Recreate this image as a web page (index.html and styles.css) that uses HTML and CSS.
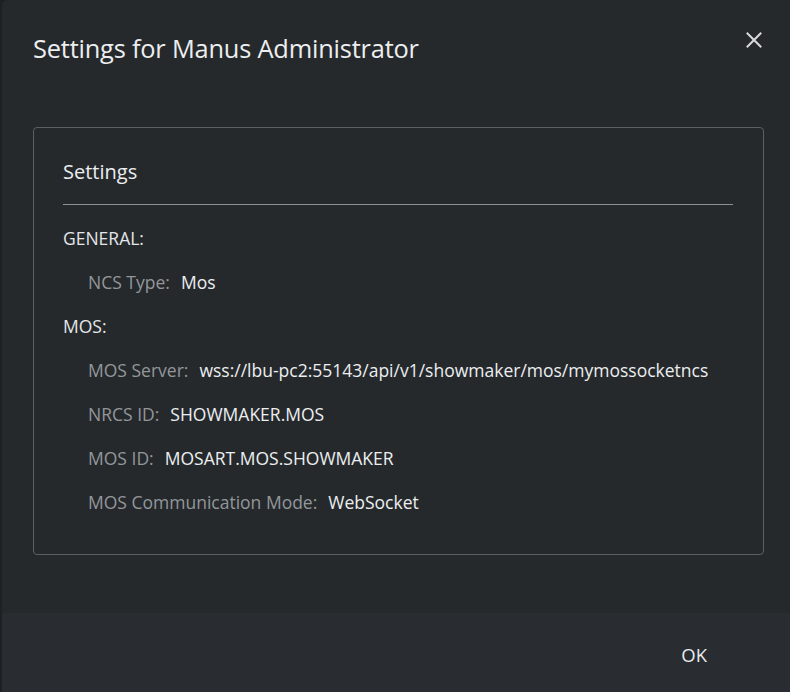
FILE: index.html
```html
<!DOCTYPE html>
<html>
<head>
<meta charset="utf-8">
<link rel="stylesheet" href="styles.css">
</head>
<body>
<div class="dialog">
  <div class="header">
    <h1 class="title">Settings for Manus Administrator</h1>
    <button class="close" aria-label="Close">
      <svg width="16" height="16" viewBox="0 0 16 16"><path d="M1.5 1.5 L14.5 14.5 M14.5 1.5 L1.5 14.5" stroke="#d8dadc" stroke-width="2" stroke-linecap="square"/></svg>
    </button>
  </div>
  <div class="body">
    <div class="card">
      <h2 class="card-title">Settings</h2>
      <div class="section">GENERAL:</div>
      <div class="row"><span class="label">NCS Type:</span><span class="value">Mos</span></div>
      <div class="section">MOS:</div>
      <div class="row"><span class="label">MOS Server:</span><span class="value">wss://lbu-pc2:55143/api/v1/showmaker/mos/mymossocketncs</span></div>
      <div class="row"><span class="label">NRCS ID:</span><span class="value">SHOWMAKER.MOS</span></div>
      <div class="row"><span class="label">MOS ID:</span><span class="value">MOSART.MOS.SHOWMAKER</span></div>
      <div class="row"><span class="label">MOS Communication Mode:</span><span class="value">WebSocket</span></div>
    </div>
  </div>
  <div class="footer">
    <button class="ok">OK</button>
  </div>
</div>
</body>
</html>
```
FILE: styles.css
```css
html, body {
  margin: 0;
  padding: 0;
  background: #1e2124;
  height: 100%;
}
body {
  font-family: "Open Sans", "Noto Sans", sans-serif;
  color: #e4e6e8;
  padding-left: 2px;
  box-sizing: border-box;
}
.dialog {
  height: 692px;
  background: #25292c;
  border-top-left-radius: 6px;
  border-bottom-left-radius: 6px;
  display: flex;
  flex-direction: column;
}
.header {
  display: flex;
  justify-content: space-between;
  align-items: flex-start;
  padding: 29px 28px 0 31px;
  height: 97px;
  box-sizing: border-box;
}
.title {
  margin: 0;
  font-size: 25.4px;
  font-weight: 400;
  line-height: 38px;
  color: #eceef0;
  letter-spacing: -0.2px;
}
.close {
  background: none;
  border: 0;
  padding: 0;
  margin-top: 3px;
  width: 16px;
  height: 16px;
  cursor: pointer;
}
.body {
  flex: 1;
  padding: 30px 26px 0 31px;
}
.card {
  border: 1px solid #5b5f63;
  border-radius: 4px;
  height: 428px;
  box-sizing: border-box;
  padding: 28px 30px 0 29px;
}
.card-title {
  margin: 0;
  font-size: 20px;
  font-weight: 400;
  line-height: 32px;
  padding-bottom: 16px;
  border-bottom: 1px solid #8d9195;
  color: #eceef0;
}
.section {
  font-size: 17.5px;
  line-height: 22px;
  margin-top: 22px;
  color: #e4e6e8;
}
.row {
  font-size: 17.5px;
  line-height: 22px;
  margin-top: 22px;
  padding-left: 25px;
}
.label {
  color: #93979b;
  margin-right: 11px;
}
.value {
  color: #eceef0;
}
.footer {
  height: 79px;
  background: #292c30;
  display: flex;
  justify-content: flex-end;
  align-items: center;
  padding-right: 83px;
}
.ok {
  background: none;
  border: 0;
  font-family: inherit;
  font-size: 18.5px;
  color: #e8eaec;
  padding: 0;
  cursor: pointer;
  margin-top: 4px;
}
```
